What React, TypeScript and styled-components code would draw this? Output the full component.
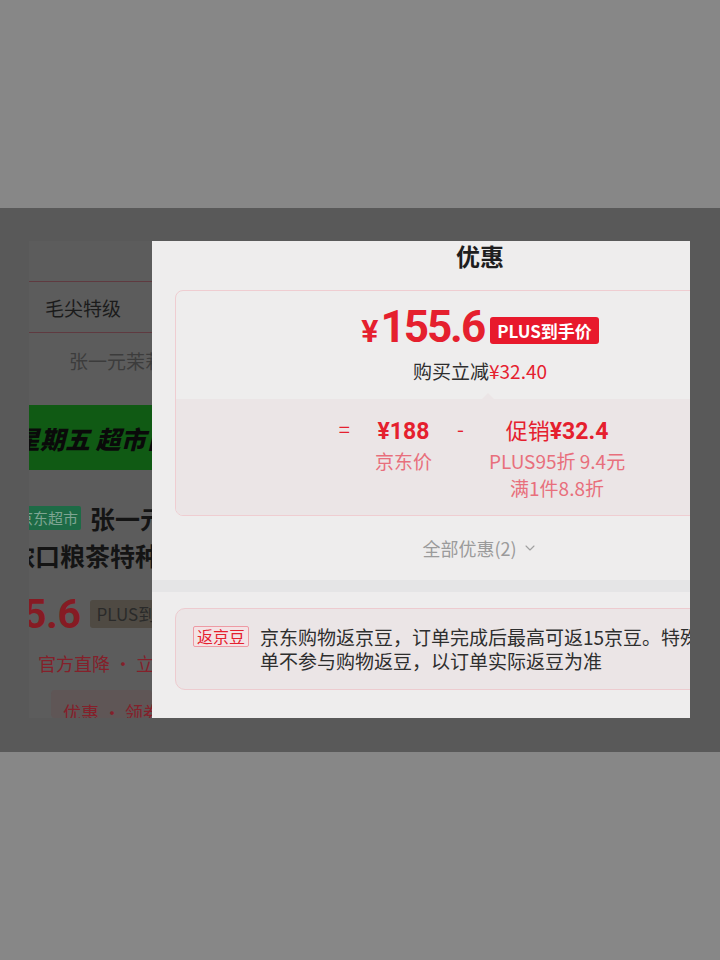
import React from "react";
import styled, { createGlobalStyle } from "styled-components";
import { ChevronDown } from "lucide-react";

const Global = createGlobalStyle`
  html, body {
    margin: 0;
    padding: 0;
    background: #878787;
  }
  body {
    font-family: "Noto Sans CJK SC", "Noto Sans", sans-serif;
  }
  * { box-sizing: border-box; }
`;

const Page = styled.div`
  width: 720px;
  height: 960px;
  padding-top: 208px;
  background: #878787;
`;

const Stage = styled.div`
  height: 544px;
  background: #595959;
  padding: 33px 30px 0 29px;
`;

const Screen = styled.div`
  display: flex;
  width: 661px;
  height: 477px;
  overflow: hidden;
`;

/* ---------- product page behind the sheet (dimmed) ---------- */

const Behind = styled.div`
  flex: 0 0 123px;
  background: #5c5c5c;
  overflow: hidden;
  display: flex;
  flex-direction: column;
  white-space: nowrap;
`;

const SpecBox = styled.div`
  margin-top: 40px;
  margin-left: -1px;
  width: 300px;
  height: 56px;
  border: 1px solid #5f3a40;
  display: flex;
  align-items: center;
  padding-left: 16px;
  font-size: 19px;
  color: #1b1b1b;
`;

const SpecName = styled.div`
  margin-top: 14px;
  padding-left: 40px;
  line-height: 28px;
  font-size: 19px;
  color: #3c3c3c;
`;

const Banner = styled.div`
  margin-top: 30px;
  height: 70px;
  background: #105a14;
  display: flex;
  align-items: center;
  font-size: 25px;
  font-weight: 900;
  font-style: italic;
  color: #0a0a0a;
  text-indent: -14px;
`;

const TitleLine = styled.div`
  margin-top: 30px;
  height: 38px;
  display: flex;
  align-items: center;
  gap: 9px;
  margin-left: -14px;
`;

const StoreTag = styled.span`
  background: #1d6b46;
  color: #7ea592;
  font-size: 15px;
  line-height: 24px;
  height: 24px;
  padding: 0 3px;
  border-radius: 2px;
`;

const TitleText = styled.span`
  font-size: 25px;
  font-weight: 700;
  color: #141414;
`;

const TitleSecond = styled.div`
  line-height: 38px;
  font-size: 25px;
  font-weight: 700;
  color: #141414;
  margin-left: -19px;
`;

const BehindPriceRow = styled.div`
  margin-top: 14px;
  height: 56px;
  display: flex;
  align-items: center;
  gap: 10px;
  margin-left: -52px;
`;

const BehindPrice = styled.span`
  font-family: Roboto, "Noto Sans", sans-serif;
  font-size: 41px;
  font-weight: 700;
  color: #861b23;
  letter-spacing: -0.5px;
`;

const BehindPlus = styled.span`
  height: 28px;
  line-height: 28px;
  padding: 0 6px;
  background: #4f4a43;
  color: #2a2a2a;
  font-size: 17px;
  border-radius: 3px;
`;

const PromoText = styled.div`
  margin-top: 8px;
  line-height: 30px;
  padding-left: 9px;
  font-size: 18px;
  color: #84202a;
`;

const ChipRow = styled.div`
  margin-top: 12px;
  height: 28px;
  margin-left: 22px;
  background: #5f5656;
  border-radius: 4px;
  padding: 9px 12px 0;
  font-size: 18px;
  color: #84202a;
`;

/* ---------- offer sheet ---------- */

const Sheet = styled.div`
  flex: 0 0 656px;
  background: #eeeded;
  padding: 0 23px;
  display: flex;
  flex-direction: column;
`;

const SheetTitle = styled.div`
  height: 30px;
  line-height: 30px;
  text-align: center;
  font-size: 24px;
  font-weight: 700;
  color: #1e1e1e;
  margin-bottom: 19px;
`;

const OfferCard = styled.div`
  border: 1px solid #efcdd1;
  border-radius: 8px;
  background: #eeeded;
  overflow: hidden;
`;

const Summary = styled.div`
  height: 108px;
  padding-top: 15px;
  display: flex;
  flex-direction: column;
  align-items: center;
`;

const PriceRow = styled.div`
  display: flex;
  align-items: center;
  gap: 6px;
  height: 46px;
`;

const BigPrice = styled.span`
  color: #e5202e;
  font-family: Roboto, "Noto Sans", sans-serif;
  font-weight: 700;
  font-size: 44px;
  line-height: 46px;
  letter-spacing: -2px;
  display: flex;
  align-items: baseline;
`;

const Yen = styled.span<{ $size: number }>`
  font-size: ${(p) => p.$size}px;
  letter-spacing: 0;
  margin-right: 2px;
`;

const PlusBadge = styled.span`
  height: 27px;
  line-height: 27px;
  padding: 0 7px;
  background: #e8192c;
  color: #fff;
  font-size: 17px;
  font-weight: 700;
  border-radius: 3px;
  margin-top: 3px;
`;

const SaveLine = styled.div`
  margin-top: 7px;
  line-height: 24px;
  font-size: 19px;
  color: #2e2e2e;
`;

const Red = styled.span`
  color: #e5202e;
`;

const Breakdown = styled.div`
  position: relative;
  height: 116px;
  background: #ebe5e6;
  padding-top: 15px;
  display: flex;
  justify-content: center;
  align-items: flex-start;
  gap: 25px;
  padding-left: 4px;

  &::before {
    content: "";
    position: absolute;
    top: -6px;
    left: 306px;
    border-left: 6px solid transparent;
    border-right: 6px solid transparent;
    border-bottom: 6px solid #ebe5e6;
  }
`;

const Operator = styled.span`
  line-height: 30px;
  font-size: 20px;
  color: #e5202e;
`;

const Column = styled.div`
  display: flex;
  flex-direction: column;
  align-items: center;
`;

const Amount = styled.div`
  line-height: 30px;
  font-size: 22px;
  color: #e5202e;
  white-space: nowrap;
`;

const AmountNum = styled.span`
  font-family: Roboto, "Noto Sans", sans-serif;
  font-weight: 700;
  font-size: 23px;
`;

const Detail = styled.div`
  line-height: 27px;
  font-size: 19px;
  color: #e86f7c;
  white-space: nowrap;
`;

const AllOffers = styled.div`
  margin-top: 17px;
  height: 30px;
  display: flex;
  align-items: center;
  justify-content: center;
  gap: 5px;
  font-size: 18px;
  color: #9b9b9b;
`;

const Divider = styled.div`
  margin: 17px -23px 0;
  height: 12px;
  background: #e5e5e6;
`;

const BeanCard = styled.div`
  margin-top: 16px;
  border: 1px solid #edcbcf;
  border-radius: 10px;
  background: #ebe5e6;
  padding: 16px 17px;
  display: flex;
  align-items: flex-start;
  gap: 11px;
`;

const BeanTag = styled.span`
  flex: 0 0 auto;
  margin-top: 1px;
  border: 1px solid #ee9aa4;
  border-radius: 2px;
  padding: 0 3px;
  line-height: 19px;
  font-size: 16px;
  color: #e5202e;
  background: #f3e3e5;
`;

const BeanText = styled.div`
  font-size: 19px;
  line-height: 24px;
  color: #2e2e2e;
`;

export default function App() {
  return (
    <>
      <Global />
      <Page>
        <Stage>
          <Screen>
            <Behind>
              <SpecBox>毛尖特级</SpecBox>
              <SpecName>张一元茉莉花茶</SpecName>
              <Banner>星期五 超市日</Banner>
              <TitleLine>
                <StoreTag>京东超市</StoreTag>
                <TitleText>张一元茉莉花茶</TitleText>
              </TitleLine>
              <TitleSecond>浓口粮茶特种</TitleSecond>
              <BehindPriceRow>
                <BehindPrice>155.6</BehindPrice>
                <BehindPlus>PLUS到手价</BehindPlus>
              </BehindPriceRow>
              <PromoText>官方直降 · 立减</PromoText>
              <ChipRow>优惠 · 领券</ChipRow>
            </Behind>

            <Sheet>
              <SheetTitle>优惠</SheetTitle>
              <OfferCard>
                <Summary>
                  <PriceRow>
                    <BigPrice>
                      <Yen $size={32}>¥</Yen>155.6
                    </BigPrice>
                    <PlusBadge>PLUS到手价</PlusBadge>
                  </PriceRow>
                  <SaveLine>
                    购买立减<Red>¥32.40</Red>
                  </SaveLine>
                </Summary>
                <Breakdown>
                  <Operator>=</Operator>
                  <Column>
                    <Amount>
                      <AmountNum>¥188</AmountNum>
                    </Amount>
                    <Detail>京东价</Detail>
                  </Column>
                  <Operator>-</Operator>
                  <Column>
                    <Amount>
                      促销<AmountNum>¥32.4</AmountNum>
                    </Amount>
                    <Detail>PLUS95折 9.4元</Detail>
                    <Detail>满1件8.8折</Detail>
                  </Column>
                </Breakdown>
              </OfferCard>
              <AllOffers>
                全部优惠(2)
                <ChevronDown size={16} strokeWidth={1.6} color="#a0a0a0" />
              </AllOffers>
              <Divider />
              <BeanCard>
                <BeanTag>返京豆</BeanTag>
                <BeanText>
                  京东购物返京豆，订单完成后最高可返15京豆。特殊商品订单不参与购物返豆，以订单实际返豆为准
                </BeanText>
              </BeanCard>
            </Sheet>
          </Screen>
        </Stage>
      </Page>
    </>
  );
}
